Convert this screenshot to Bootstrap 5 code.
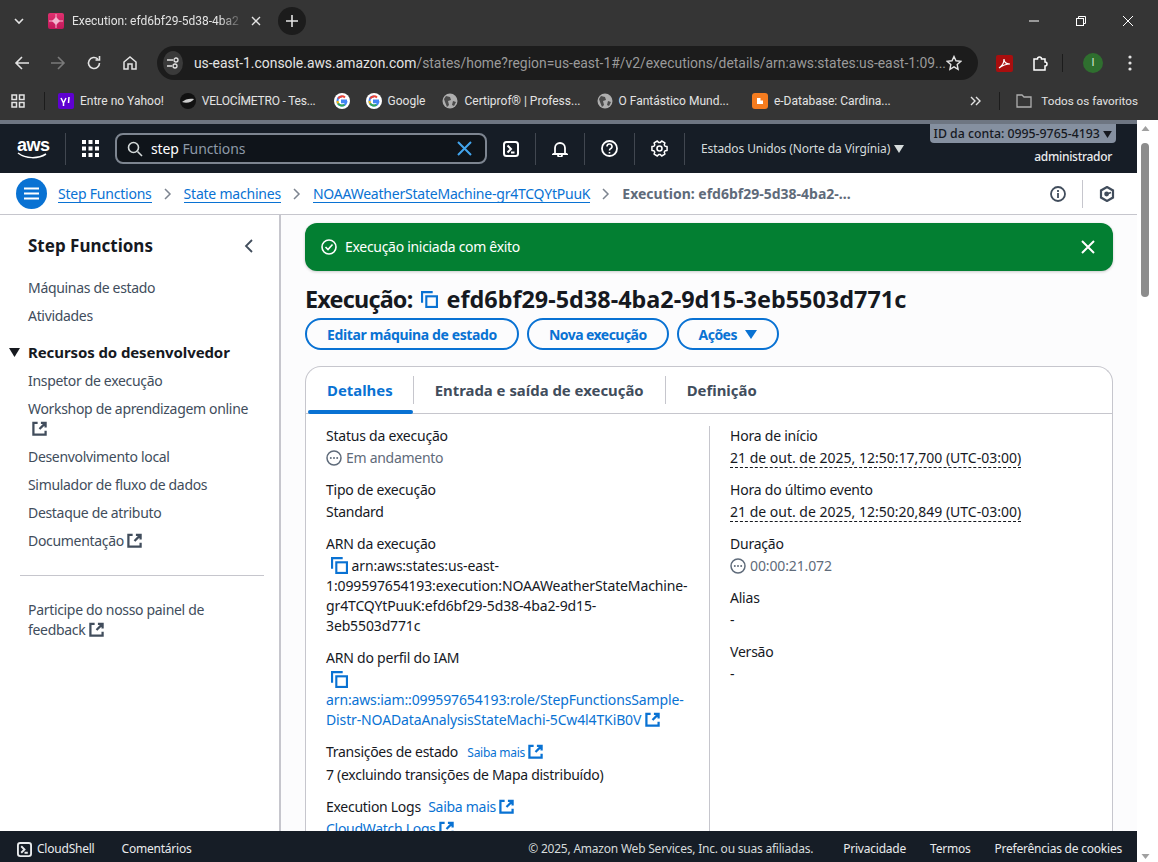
<!DOCTYPE html>
<html lang="pt-BR">
<head>
<meta charset="utf-8">
<title>Execution</title>
<link href="https://cdn.jsdelivr.net/npm/bootstrap@5.3.0/dist/css/bootstrap.min.css" rel="stylesheet">
<style>
html,body{height:862px;overflow:hidden}
body{font-family:"Noto Sans","Open Sans",sans-serif;font-size:14px;line-height:20px;color:#16191f;background:#fff;letter-spacing:-.22px}
.shot{height:862px}
.spritebox{position:absolute}
.chrome{background:#353535;color:#e3e3e3;font-family:"Roboto",sans-serif;font-size:12px;letter-spacing:0;flex:none;height:120px}
.tabrow{height:41px;padding-left:13px}
.tabtitle{width:172px;margin-left:8px;white-space:nowrap;color:#e3e3e3;-webkit-mask-image:linear-gradient(90deg,#000 86%,transparent)}
.favi{width:16px;height:16px;background:linear-gradient(180deg,#e0316f,#c2185b);border-radius:2px;margin-left:23px}
.tabx{margin-left:6px}
.newtab{width:28px;height:28px;background:#1c1c1c;border-radius:50%;margin-left:16px}
.winbtns{gap:35px;padding-right:24px;margin-left:auto}
.toolrow{height:44px;padding:0 14px}
.toolicons{gap:20px;width:143px}
.omni{height:34px;width:821px;background:#1c1c1c;border-radius:17px;font-size:13.9px;padding:0 16px 0 6px;color:#9a9a9a;white-space:nowrap;flex:none}
.omni b{font-weight:400;color:#e3e3e3}
.tuneic{width:24px;height:24px;border-radius:50%;background:#3a3a3a;margin-right:11px}
.pdfic{margin-left:18px}
.extic{margin-left:19px}
.vsep{width:1px;height:18px;background:#1c1c1c}
.sep-a{margin-left:13px}
.avatar{width:20px;height:20px;background:#2f6f2f;color:#d8e8d8;font-size:11px;margin-left:20px}
.kebab{margin-left:25px}
.bmrow{height:35px;padding:0 14px 3px 11px;white-space:nowrap}
.bm{gap:6px;color:#e3e3e3;margin-left:16px}
.bm.first{margin-left:13px}
.bm.velo{letter-spacing:-.2px}
.bm.certi{margin-left:17px}
.bm.blog{margin-left:23px}
.appsep{margin-left:19px}
.gfirst{margin-left:18px}
.more{margin-left:auto}
.favsep{margin:0 16px 0 17px}
.bm.favs{margin:0 6px 0 0;gap:9px;font-size:11.7px}
.pagewrap{min-width:0;width:1137px;flex:none}
.strip{height:4px;background:#6e7682;flex:none}
.awshead{height:49px;background:#161d26;color:#d5dbdb;font-size:12px;letter-spacing:-.1px;flex:none}
.awslogo{width:32px;font:700 18px/14px "Liberation Sans",sans-serif;color:#fff;letter-spacing:-.5px;margin-left:17px}
.hsep{width:1px;height:32px;background:#414750}
.searchb{width:372px;height:31px;border:2px solid #7d8590;border-radius:8px;background:#0f141a;padding:0 13px 0 10px;font-size:14px;color:#8d99a8}
.searchb b{font-weight:400;color:#fff}
.acctwrap{margin-right:21px}
.acctid{background:#8590a0;color:#16191f;border-radius:0 0 4px 4px;font-size:12.3px;height:19px;line-height:19px;padding:0 4px;letter-spacing:0;font-weight:500}
.acctuser{margin:4px 4px 0 0;letter-spacing:-.3px;font-weight:500;color:#e9ebed}
.crumbbar{height:42px;border-bottom:1px solid #c6c6cd;padding:0 22px 0 16px;background:#fff;flex:none}
.menucirc{width:31px;height:31px;border-radius:50%;background:#0972d3;margin-right:11px}
.breadcrumb{margin:0;font-size:14px}
.breadcrumb-item+.breadcrumb-item{padding-left:0}
.breadcrumb-item+.breadcrumb-item::before{display:none}
.crumb{color:#0972d3;text-decoration:none;border-bottom:1px solid #0972d3;line-height:17px;display:inline-block}
.chev{margin:0 12px}
.crumbnow{color:#5f6b7a;font-weight:700;letter-spacing:0}
.crumbsep{width:1px;height:28px;background:#c6c6cd}
.mainarea{min-height:0;overflow:hidden}
.sidenav{width:281px;flex:none;border-right:2px solid #c6c6cd;padding:0 0 0 28px;color:#414d5c;background:#fff;letter-spacing:-.32px}
.navtitle{font-size:17px;font-weight:700;color:#16191f;line-height:24px;margin:19px 0 0;letter-spacing:0}
.navback{margin:19px 25px 0 0}
.navlist{margin:0;padding:0;list-style:none}
.navlist li{margin-bottom:8px}
.navfirst{margin-top:20px}
.navhead{font-size:15px;font-weight:700;color:#16191f;position:relative;margin:16px 0 9px;letter-spacing:-.1px}
.navcaret{position:absolute;left:-19px;top:6px}
.navrule{border-top:1px solid #c6c6cd;margin:24px 15px 24px -8px}
.pagepane{min-width:0;background:#fcfcfd;padding:8px 24px 0 24px;overflow:hidden}
.flash{background:#037f32;color:#fff;border:0;border-radius:12px;height:48px;padding:0 18px 0 16px;margin:0 0 14px;box-shadow:0 1px 3px rgba(0,0,0,.2);letter-spacing:-.3px}
.pagetitle{font-size:23.4px;font-weight:700;line-height:28px;margin:0 0 5px;letter-spacing:0;white-space:nowrap}
.pagelabel{letter-spacing:-.8px}
.titlecopy{margin:1px 8px 0 9px;color:#0972d3}
.pillb{--bs-btn-color:#0972d3;--bs-btn-border-color:#0972d3;--bs-btn-font-weight:700;--bs-btn-font-size:14px;border-width:2px;border-radius:20px;height:32px;line-height:17px;padding:5px 20px;white-space:nowrap;letter-spacing:-.37px}
.pillb.tight{letter-spacing:-.55px}
.pillgroup{gap:8px;margin-bottom:16px}
.detailpanel{border:1px solid #c6c6cd;border-bottom:0;border-radius:16px 16px 0 0;background:#fff}
.tabsline{height:47px;border-bottom:1px solid #c6c6cd}
.tabit{font-size:14.9px;font-weight:700;color:#414d5c;padding:0 21px;border-right:1px solid #c6c6cd;height:28px;line-height:28px;white-space:nowrap;position:relative;letter-spacing:0}
.tabit.last{border-right:0}
.tabit.act{color:#0972d3;padding-right:20px}
.tabit.act::after{content:"";position:absolute;left:2px;right:0;bottom:-10px;height:4px;border-radius:2px;background:#0972d3}
.detailcols{padding-top:12px}
.colleft{width:404px;flex:none;padding:0 20px;border-right:1px solid #c6c6cd}
.colright{padding:0 20px}
.fieldlab{margin-bottom:2px}
.fieldval{margin-bottom:12px;min-height:20px;letter-spacing:-.13px}
.fieldtext{letter-spacing:-.28px}
.muted{color:#5f6b7a}
.dashed{border-bottom:1px dashed #16191f;display:inline-block;line-height:18px;letter-spacing:0}
.alink{color:#0972d3;text-decoration:none}
.smalllink{font-size:12px;margin-left:6px}
.iccopy{color:#0972d3;margin-left:5px;vertical-align:-3px}
.footbar{height:31px;background:#161d26;color:#e9ebed;font-size:12px;padding:5px 15px 0 17px;white-space:nowrap;flex:none;gap:24px}
.footbar .csgrp{gap:5px;margin-right:3px}
.footcopy{margin-left:auto;margin-right:6px;color:#d5dbdb}
.scrolltrack{flex:1;background:#fff;position:relative}
.scrollup{position:absolute;top:6px;left:4px}
.scrolldown{position:absolute;bottom:3px;left:4px}
.scrollthumb{position:absolute;top:23px;left:4px;width:8px;height:154px;background:#8c8c8c;border-radius:4px}
svg{flex:none}
.inl{vertical-align:-2px}
</style>
</head>
<body>
<svg width="0" height="0" class="spritebox">
<symbol id="ext" viewBox="0 0 16 16"><path d="M9.500 2H14.500V7M14 2.500L8 8.500M6 2H1.500V14.500H14.500V10.500" fill="none" stroke="currentColor" stroke-width="2.400"/></symbol>
<symbol id="copy" viewBox="0 0 16 16"><path d="M1 11V1H11" fill="none" stroke="currentColor" stroke-width="2"/><rect x="5" y="5" width="10" height="10" fill="none" stroke="currentColor" stroke-width="2"/></symbol>
<symbol id="dots" viewBox="0 0 16 16"><circle cx="8" cy="8" r="7" fill="none" stroke="currentColor" stroke-width="1.500"/><circle cx="4.800" cy="8" r="1" fill="currentColor"/><circle cx="8" cy="8" r="1" fill="currentColor"/><circle cx="11.200" cy="8" r="1" fill="currentColor"/></symbol>
<symbol id="globe" viewBox="0 0 16 16"><circle cx="8" cy="8" r="7.500" fill="#aeaeae"/><path d="M4 3l4 1 1 3-3 1 1 4-2 2-2-5-1-3zM11 8l3 1-2 4-2-1z" fill="#4b4b4b"/></symbol>
<symbol id="goog" viewBox="0 0 16 16"><circle cx="8" cy="8" r="8" fill="#fff"/><path d="M8 3.500a4.500 4.500 0 1 0 4.300 5.800H8V7.500h5" fill="none" stroke="#4285f4" stroke-width="2"/><path d="M4.200 5.500A4.500 4.500 0 0 1 11 4.500" fill="none" stroke="#ea4335" stroke-width="2"/><path d="M3.500 8a4.500 4.500 0 0 0 .7 2.500" fill="none" stroke="#fbbc05" stroke-width="2"/><path d="M4.200 10.500a4.500 4.500 0 0 0 6.300 1.200" fill="none" stroke="#34a853" stroke-width="2"/></symbol>
<symbol id="cs" viewBox="0 0 16 16"><rect x="1" y="1" width="14" height="14" rx="2.500" fill="none" stroke="currentColor" stroke-width="2"/><path d="M4.500 4.500L8 8l-3.500 3.500M8 11.500h3.500" fill="none" stroke="currentColor" stroke-width="2"/></symbol>
<symbol id="chevr" viewBox="0 0 8 12"><path d="M1 1l5 5-5 5" fill="none" stroke="#7d8590" stroke-width="1.500"/></symbol>
</svg>
<div class="shot d-flex flex-column">
  <div class="chrome">
    <div class="tabrow d-flex align-items-center">
      <svg width="12" height="12" viewBox="0 0 12 12"><path d="M2 4l4 4 4-4" fill="none" stroke="#e3e3e3" stroke-width="1.600"/></svg>
      <span class="favi d-flex align-items-center justify-content-center"><svg width="14" height="14" viewBox="0 0 14 14"><path d="M7 0v14M0 7h14" stroke="#f3b6cf" stroke-width="1"/><path d="M7 3l4 4-4 4-4-4z" fill="#f3b6cf"/></svg></span>
      <span class="tabtitle">Execution: efd6bf29-5d38-4ba2</span>
      <svg class="tabx" width="12" height="12" viewBox="0 0 12 12"><path d="M2 2l8 8M10 2l-8 8" stroke="#e3e3e3" stroke-width="1.400"/></svg>
      <span class="newtab d-flex align-items-center justify-content-center"><svg width="12" height="12" viewBox="0 0 12 12"><path d="M6 0v12M0 6h12" stroke="#e3e3e3" stroke-width="1.600"/></svg></span>
      <span class="winbtns d-flex align-items-center">
        <svg width="12" height="12" viewBox="0 0 12 12"><path d="M1 6h10" stroke="#fff" stroke-width="1"/></svg>
        <svg width="12" height="12" viewBox="0 0 12 12"><rect x="1.500" y="3.500" width="7" height="7" fill="none" stroke="#fff"/><path d="M3.500 3.500V1.500h7v7h-2" fill="none" stroke="#fff"/></svg>
        <svg width="12" height="12" viewBox="0 0 12 12"><path d="M1 1l10 10M11 1L1 11" stroke="#fff" stroke-width="1"/></svg>
      </span>
    </div>
    <div class="toolrow d-flex align-items-center">
      <div class="toolicons d-flex align-items-center">
        <svg width="16" height="16" viewBox="0 0 16 16"><path d="M15 8H2M8 2L2 8l6 6" fill="none" stroke="#e3e3e3" stroke-width="1.600"/></svg>
        <svg width="16" height="16" viewBox="0 0 16 16"><path d="M1 8h13M8 2l6 6-6 6" fill="none" stroke="#7a7a7a" stroke-width="1.600"/></svg>
        <svg width="16" height="16" viewBox="0 0 16 16"><path d="M13.500 8a5.500 5.500 0 1 1-1.700-4M13.500 1v4h-4" fill="none" stroke="#e3e3e3" stroke-width="1.600"/></svg>
        <svg width="16" height="16" viewBox="0 0 16 16"><path d="M2 7l6-5 6 5v7h-4V9H6v5H2z" fill="none" stroke="#e3e3e3" stroke-width="1.500"/></svg>
      </div>
      <div class="omni d-flex align-items-center">
        <span class="tuneic d-flex align-items-center justify-content-center"><svg width="14" height="14" viewBox="0 0 14 14"><path d="M1 4h6M1 10h5" stroke="#e3e3e3" stroke-width="1.300"/><circle cx="10" cy="4" r="2" fill="none" stroke="#e3e3e3" stroke-width="1.300"/><circle cx="9" cy="10" r="2" fill="none" stroke="#e3e3e3" stroke-width="1.300"/></svg></span>
        <span><b>us-east-1.console.aws.amazon.com</b>/states/home?region=us-east-1#/v2/executions/details/arn:aws:states:us-east-1:09...</span>
        <svg class="ms-auto" width="16" height="16" viewBox="0 0 16 16"><path d="M8 1.500l2 4.300 4.700.6-3.500 3.200.9 4.700L8 11.900l-4.100 2.400.9-4.700L1.300 6.400 6 5.800z" fill="none" stroke="#e3e3e3" stroke-width="1.400"/></svg>
      </div>
      <svg class="pdfic" width="17" height="17" viewBox="0 0 17 17"><rect width="17" height="17" rx="2" fill="#a90e0e"/><path d="M3 13c3-2 5-6 5-9 0 3 2 5 6 5-4 0-7 1-11 4z" fill="none" stroke="#fff" stroke-width="1.200"/></svg>
      <svg class="extic" width="17" height="17" viewBox="0 0 17 17"><path d="M2 4h3.500a2 2 0 0 1 4 0H13v3a2 2 0 0 1 0 4v4H2z" fill="none" stroke="#fff" stroke-width="1.500"/></svg>
      <span class="vsep sep-a"></span>
      <span class="avatar rounded-circle d-flex align-items-center justify-content-center">I</span>
      <svg class="kebab" width="4" height="16" viewBox="0 0 4 16"><circle cx="2" cy="2" r="1.600" fill="#e3e3e3"/><circle cx="2" cy="8" r="1.600" fill="#e3e3e3"/><circle cx="2" cy="14" r="1.600" fill="#e3e3e3"/></svg>
    </div>
    <div class="bmrow d-flex align-items-center">
      <svg width="14" height="14" viewBox="0 0 14 14" fill="none" stroke="#e3e3e3" stroke-width="1.500"><rect x="1" y="1" width="4.500" height="4.500"/><rect x="8.500" y="1" width="4.500" height="4.500"/><rect x="1" y="8.500" width="4.500" height="4.500"/><rect x="8.500" y="8.500" width="4.500" height="4.500"/></svg>
      <span class="vsep appsep"></span>
      <span class="bm first d-flex align-items-center"><svg width="16" height="16" viewBox="0 0 16 16"><rect width="16" height="16" rx="2" fill="#5f01d1"/><path d="M3 5l2.500 5v3M8 5l-2.500 5M11 4l-.5 6" stroke="#fff" stroke-width="1.500" fill="none"/></svg>Entre no Yahoo!</span>
      <span class="bm velo d-flex align-items-center"><svg width="16" height="16" viewBox="0 0 16 16"><circle cx="8" cy="8" r="8" fill="#111"/><path d="M2 9c3-3 8-4 12-3-2 3-7 5-12 3z" fill="#ccc"/></svg>VELOCÍMETRO - Tes...</span>
      <svg class="gfirst" width="16" height="16"><use href="#goog"/></svg>
      <span class="bm d-flex align-items-center"><svg width="16" height="16"><use href="#goog"/></svg>Google</span>
      <span class="bm certi d-flex align-items-center"><svg width="16" height="16"><use href="#globe"/></svg>Certiprof® | Profess...</span>
      <span class="bm d-flex align-items-center"><svg width="16" height="16"><use href="#globe"/></svg>O Fantástico Mund...</span>
      <span class="bm blog d-flex align-items-center"><svg width="16" height="16" viewBox="0 0 16 16"><rect width="16" height="16" rx="3" fill="#f57c1f"/><path d="M5 11V5h3.500v2.500H11V11z" fill="#fff"/></svg>e-Database: Cardina...</span>
      <svg class="more" width="12" height="12" viewBox="0 0 12 12"><path d="M1 2l4 4-4 4M6 2l4 4-4 4" fill="none" stroke="#e3e3e3" stroke-width="1.400"/></svg>
      <span class="vsep favsep"></span>
      <span class="bm favs d-flex align-items-center"><svg width="16" height="14" viewBox="0 0 16 14"><path d="M1 13V1h5l2 2h7v10z" fill="none" stroke="#aeaeae" stroke-width="1.300"/></svg>Todos os favoritos</span>
    </div>
  </div>
  <div class="d-flex flex-grow-1 mainarea">
    <div class="pagewrap d-flex flex-column">
      <div class="strip"></div>
      <header class="awshead d-flex align-items-center">
        <div class="awslogo text-center">aws<svg width="32" height="7" viewBox="0 0 32 7" class="d-block"><path d="M1 1c8 6 20 6 28 1" fill="none" stroke="#fff" stroke-width="1.500"/></svg></div>
        <span class="hsep ms-3"></span>
        <svg class="ms-3" width="17" height="17" viewBox="0 0 17 17" fill="#fff"><rect width="4" height="4"/><rect x="6.500" width="4" height="4"/><rect x="13" width="4" height="4"/><rect y="6.500" width="4" height="4"/><rect x="6.500" y="6.500" width="4" height="4"/><rect x="13" y="6.500" width="4" height="4"/><rect y="13" width="4" height="4"/><rect x="6.500" y="13" width="4" height="4"/><rect x="13" y="13" width="4" height="4"/></svg>
        <div class="searchb d-flex align-items-center ms-3">
          <svg width="16" height="16" viewBox="0 0 16 16" class="me-2"><circle cx="6.500" cy="6.500" r="5" fill="none" stroke="#d5dbdb" stroke-width="1.600"/><path d="M10.500 10.500l4.500 4.500" stroke="#d5dbdb" stroke-width="1.600"/></svg>
          <span><b>step</b> Functions</span>
          <svg class="ms-auto" width="15" height="15" viewBox="0 0 15 15"><path d="M1 1l13 13M14 1L1 14" stroke="#42a5ee" stroke-width="2"/></svg>
        </div>
        <svg class="ms-3 text-white" width="16" height="16"><use href="#cs"/></svg>
        <span class="hsep ms-3"></span>
        <svg class="ms-3" width="16" height="16" viewBox="0 0 16 16"><path d="M3 12V7a5 5 0 0 1 10 0v5l1.500 1h-13zM6 14a2 2 0 0 0 4 0" fill="none" stroke="#fff" stroke-width="1.800"/></svg>
        <span class="hsep ms-3"></span>
        <svg class="ms-3" width="17" height="17" viewBox="0 0 17 17"><circle cx="8.500" cy="8.500" r="7.500" fill="none" stroke="#fff" stroke-width="1.800"/><path d="M6 6.500a2.500 2.500 0 1 1 3.500 2.300c-.7.300-1 .8-1 1.700M8.500 12v1.500" fill="none" stroke="#fff" stroke-width="1.600"/></svg>
        <span class="hsep ms-3"></span>
        <svg class="ms-3" width="17" height="17" viewBox="0 0 17 17"><path d="M16.070 6.610L16.070 10.390 14.060 10.750 13.230 12.190 13.920 14.110 10.650 16 9.340 14.440 7.660 14.440 6.350 16 3.080 14.110 3.770 12.190 2.940 10.750.93 10.390.93 6.610 2.940 6.250 3.770 4.810 3.080 2.890 6.350 1 7.660 2.560 9.340 2.560 10.650 1 13.920 2.890 13.230 4.810 14.060 6.250z" fill="none" stroke="#fff" stroke-width="1.500" stroke-linejoin="round"/><circle cx="8.500" cy="8.500" r="2.500" fill="none" stroke="#fff" stroke-width="1.600"/></svg>
        <span class="hsep ms-3"></span>
        <span class="ms-3 text-nowrap">Estados Unidos (Norte da Virgínia)</span>
        <svg class="ms-1" width="10" height="8" viewBox="0 0 10 8"><path d="M0 0h10L5 8z" fill="#d5dbdb"/></svg>
        <div class="ms-auto d-flex flex-column align-items-end align-self-stretch acctwrap">
          <span class="acctid text-nowrap">ID da conta: 0995-9765-4193 <svg width="9" height="7" viewBox="0 0 10 8"><path d="M0 0h10L5 8z" fill="#16191f"/></svg></span>
          <span class="acctuser">administrador</span>
        </div>
      </header>
      <div class="crumbbar d-flex align-items-center">
        <span class="menucirc d-flex align-items-center justify-content-center flex-none"><svg width="15" height="13" viewBox="0 0 15 13"><path d="M0 1.500h15M0 6.500h15M0 11.500h15" stroke="#fff" stroke-width="2"/></svg></span>
        <nav aria-label="breadcrumb">
          <ol class="breadcrumb align-items-center flex-nowrap text-nowrap">
            <li class="breadcrumb-item d-flex align-items-center"><a class="crumb" href="#">Step Functions</a></li>
            <li class="breadcrumb-item d-flex align-items-center"><svg class="chev" width="8" height="12"><use href="#chevr"/></svg><a class="crumb" href="#">State machines</a></li>
            <li class="breadcrumb-item d-flex align-items-center"><svg class="chev" width="8" height="12"><use href="#chevr"/></svg><a class="crumb" href="#">NOAAWeatherStateMachine-gr4TCQYtPuuK</a></li>
            <li class="breadcrumb-item d-flex align-items-center active"><svg class="chev" width="8" height="12"><use href="#chevr"/></svg><span class="crumbnow">Execution: efd6bf29-5d38-4ba2-...</span></li>
          </ol>
        </nav>
        <svg class="ms-auto" width="16" height="16" viewBox="0 0 16 16"><circle cx="8" cy="8" r="7" fill="none" stroke="#414d5c" stroke-width="1.800"/><path d="M8 7v5M8 4v2" stroke="#414d5c" stroke-width="1.800"/></svg>
        <span class="mx-3 crumbsep"></span>
        <svg width="16" height="16" viewBox="0 0 16 16"><path d="M8 1l6 3.500v7L8 15l-6-3.500v-7z" fill="none" stroke="#414d5c" stroke-width="2.200"/><circle cx="7.600" cy="8" r="2.400" fill="#414d5c"/><path d="M8 8l4-1.500" stroke="#414d5c" stroke-width="1.400"/></svg>
      </div>
      <div class="d-flex flex-grow-1 mainarea">
        <aside class="sidenav">
          <div class="d-flex align-items-center justify-content-between">
            <p class="navtitle">Step Functions</p>
            <svg class="navback" width="10" height="14" viewBox="0 0 10 14"><path d="M8 1L2 7l6 6" fill="none" stroke="#414d5c" stroke-width="1.800"/></svg>
          </div>
          <ul class="navlist navfirst">
            <li>Máquinas de estado</li>
            <li>Atividades</li>
          </ul>
          <div class="navhead"><svg class="navcaret" width="11" height="9" viewBox="0 0 11 9"><path d="M0 0h11L5.500 9z" fill="#16191f"/></svg>Recursos do desenvolvedor</div>
          <ul class="navlist">
            <li>Inspetor de execução</li>
            <li>Workshop de aprendizagem online<br><svg class="inl ms-1" width="15" height="15"><use href="#ext"/></svg></li>
            <li>Desenvolvimento local</li>
            <li>Simulador de fluxo de dados</li>
            <li>Destaque de atributo</li>
            <li>Documentação <svg class="inl" width="15" height="15"><use href="#ext"/></svg></li>
          </ul>
          <div class="navrule"></div>
          <p class="m-0">Participe do nosso painel de<br>feedback <svg class="inl" width="15" height="15"><use href="#ext"/></svg></p>
        </aside>
        <main class="pagepane flex-grow-1">
          <div class="alert flash d-flex align-items-center" role="alert">
            <svg class="me-2" width="16" height="16" viewBox="0 0 16 16"><circle cx="8" cy="8" r="7" fill="none" stroke="#fff" stroke-width="1.600"/><path d="M4.500 8l2.500 2.500 4.500-5" fill="none" stroke="#fff" stroke-width="1.600"/></svg>
            <span>Execução iniciada com êxito</span>
            <svg class="ms-auto" width="14" height="14" viewBox="0 0 14 14"><path d="M1 1l12 12M13 1L1 13" stroke="#fff" stroke-width="2"/></svg>
          </div>
          <h1 class="pagetitle d-flex align-items-center"><span class="pagelabel">Execução:</span><svg class="titlecopy" width="17" height="17"><use href="#copy"/></svg>efd6bf29-5d38-4ba2-9d15-3eb5503d771c</h1>
          <div class="d-flex pillgroup">
            <button type="button" class="btn pillb">Editar máquina de estado</button>
            <button type="button" class="btn pillb tight">Nova execução</button>
            <button type="button" class="btn pillb tight d-flex align-items-center">Ações<svg class="ms-2" width="12" height="9" viewBox="0 0 12 9"><path d="M0 0h12L6 9z" fill="#0972d3"/></svg></button>
          </div>
          <section class="detailpanel">
            <div class="tabsline d-flex align-items-center">
              <div class="tabit act">Detalhes</div>
              <div class="tabit">Entrada e saída de execução</div>
              <div class="tabit last">Definição</div>
            </div>
            <div class="d-flex detailcols">
              <div class="colleft">
                <div class="fieldlab">Status da execução</div>
                <div class="fieldval fieldtext muted d-flex align-items-center"><svg class="me-1" width="16" height="16"><use href="#dots"/></svg>Em andamento</div>
                <div class="fieldlab">Tipo de execução</div>
                <div class="fieldval fieldtext">Standard</div>
                <div class="fieldlab">ARN da execução</div>
                <div class="fieldval"><svg class="iccopy" width="17" height="17"><use href="#copy"/></svg> arn:aws:states:us-east-1:099597654193:execution:NOAAWeatherStateMachine-gr4TCQYtPuuK:efd6bf29-5d38-4ba2-9d15-3eb5503d771c</div>
                <div class="fieldlab">ARN do perfil do IAM</div>
                <div class="fieldval"><svg class="iccopy" width="17" height="17"><use href="#copy"/></svg><br><a class="alink" href="#">arn:aws:iam::099597654193:role/StepFunctionsSample-Distr-NOADataAnalysisStateMachi-5Cw4l4TKiB0V <svg class="inl" width="15" height="15"><use href="#ext"/></svg></a></div>
                <div class="fieldlab fieldtext">Transições de estado <a class="alink smalllink" href="#">Saiba mais <svg class="inl" width="15" height="15"><use href="#ext"/></svg></a></div>
                <div class="fieldval fieldtext">7 (excluindo transições de Mapa distribuído)</div>
                <div class="fieldlab fieldtext">Execution Logs <a class="alink ms-1" href="#">Saiba mais <svg class="inl" width="15" height="15"><use href="#ext"/></svg></a></div>
                <div class="fieldval fieldtext"><a class="alink" href="#">CloudWatch Logs <svg class="inl" width="15" height="15"><use href="#ext"/></svg></a></div>
              </div>
              <div class="colright">
                <div class="fieldlab">Hora de início</div>
                <div class="fieldval"><span class="dashed">21 de out. de 2025, 12:50:17,700 (UTC-03:00)</span></div>
                <div class="fieldlab">Hora do último evento</div>
                <div class="fieldval"><span class="dashed">21 de out. de 2025, 12:50:20,849 (UTC-03:00)</span></div>
                <div class="fieldlab">Duração</div>
                <div class="fieldval muted d-flex align-items-center"><svg class="me-1" width="16" height="16"><use href="#dots"/></svg>00:00:21.072</div>
                <div class="fieldlab">Alias</div>
                <div class="fieldval">-</div>
                <div class="fieldlab">Versão</div>
                <div class="fieldval">-</div>
              </div>
            </div>
          </section>
        </main>
      </div>
      <footer class="footbar d-flex align-items-center">
        <span class="csgrp d-flex align-items-center"><svg width="15" height="15"><use href="#cs"/></svg>CloudShell</span>
        <span>Comentários</span>
        <span class="footcopy">© 2025, Amazon Web Services, Inc. ou suas afiliadas.</span>
        <span>Privacidade</span>
        <span>Termos</span>
        <span>Preferências de cookies</span>
      </footer>
    </div>
    <div class="scrolltrack">
      <svg class="scrollup" width="9" height="5" viewBox="0 0 8 5"><path d="M0 5L4 0l4 5z" fill="#a0a0a0"/></svg>
      <div class="scrollthumb"></div>
      <svg class="scrolldown" width="9" height="5" viewBox="0 0 8 5"><path d="M0 0L4 5l4-5z" fill="#a0a0a0"/></svg>
    </div>
  </div>
</div>
</body>
</html>
